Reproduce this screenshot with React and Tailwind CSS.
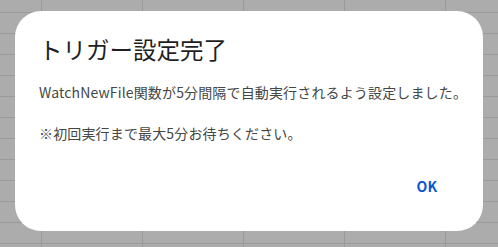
export default function App() {
  return (
    <div
      className="relative w-[498px] h-[247px] overflow-hidden bg-[#acacac] bg-[linear-gradient(to_right,#9a9a9a_1px,transparent_1px),linear-gradient(to_bottom,#9a9a9a_1px,transparent_1px)] bg-[size:101px_21px] bg-[position:41px_12px]"
      style={{ fontFamily: '"Noto Sans CJK JP", "Noto Sans", sans-serif' }}
    >
      <div className="absolute left-[15px] top-[11px] w-[468px] h-[220px] rounded-[26px] bg-white pl-[24px] pr-[20px] pt-[22px] flex flex-col">
        <h1 className="text-[23.5px] leading-[32px] text-[#1f1f1f] font-normal whitespace-nowrap">トリガー設定完了</h1>
        <p className="mt-[17px] text-[14px] leading-[20px] text-[#444746] whitespace-nowrap tracking-[0.15px]">
          WatchNewFile関数が5分間隔で自動実行されるよう設定しました。
        </p>
        <p className="mt-[21px] text-[14px] leading-[20px] text-[#444746] whitespace-nowrap tracking-[0.15px]">
          ※初回実行まで最大5分お待ちください。
        </p>
        <div className="mt-[33px] flex justify-end pr-[26px]">
          <button className="text-[14px] leading-[20px] font-bold text-[#0b57d0]">OK</button>
        </div>
      </div>
    </div>
  );
}
